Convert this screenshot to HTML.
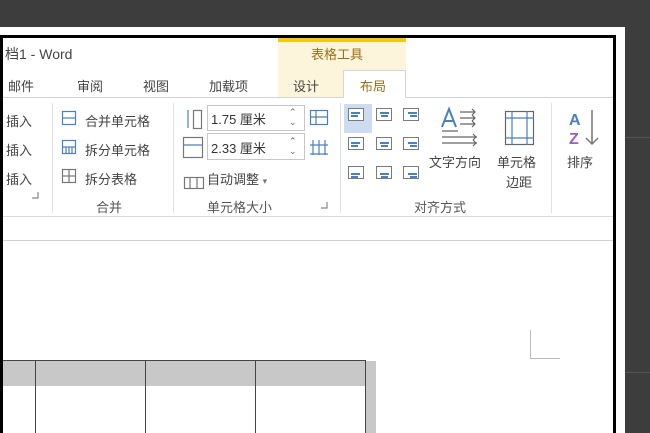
<!DOCTYPE html><html><head><meta charset="utf-8"><style>
*{margin:0;padding:0;box-sizing:border-box}
body{width:650px;height:433px;background:#3d3d3d;position:relative;overflow:hidden;font-family:"Liberation Sans","Noto Sans CJK SC",sans-serif;font-size:13px;color:#444}
.a{position:absolute;white-space:nowrap}
.ib{position:absolute;width:16px;height:13px;border:1px solid #7a7a7a;background:#fff}
.ib i{position:absolute;height:1.5px;background:#4a7fc0;left:2px}
</style></head><body>
<div class="a" style="left:0;top:27px;width:625px;height:406px;background:#fff"></div>
<div class="a" style="left:625px;top:137px;width:25px;height:1px;background:#555"></div>
<div class="a" style="left:625px;top:372px;width:25px;height:1px;background:#555"></div>
<div class="a" style="left:0;top:35px;width:616px;height:398px;border:3px solid #000;border-bottom:none;background:#fff"></div>
<!-- contextual header -->
<div class="a" style="left:278px;top:38px;width:128px;height:59px;background:#fdf4dc"></div>
<div class="a" style="left:278px;top:38px;width:128px;height:4px;background:#f2c811"></div>
<div class="a" style="left:311px;top:44px;color:#9a6f16;font-size:13px">表格工具</div>
<div class="a" style="left:5px;top:44px;font-size:14px;color:#444">档1 - Word</div>
<div class="a" style="left:343px;top:70px;width:63px;height:28px;background:#fff;border:1px solid #d5d5d5;border-bottom:none"></div>
<div class="a" style="left:8px;top:76px">邮件</div>
<div class="a" style="left:77px;top:76px">审阅</div>
<div class="a" style="left:143px;top:76px">视图</div>
<div class="a" style="left:209px;top:76px">加载项</div>
<div class="a" style="left:293px;top:76px">设计</div>
<div class="a" style="left:360px;top:76px;color:#9a6f16">布局</div>
<div class="a" style="left:3px;top:97px;width:340px;height:1px;background:#d5d5d5"></div>
<div class="a" style="left:406px;top:97px;width:207px;height:1px;background:#d5d5d5"></div>
<!-- ribbon -->
<div class="a" style="left:6px;top:111px">插入</div>
<div class="a" style="left:6px;top:140px">插入</div>
<div class="a" style="left:6px;top:169px">插入</div>
<div class="a" style="left:52px;top:103px;width:1px;height:110px;background:#e2e2e2"></div>
<div class="a" style="left:173px;top:103px;width:1px;height:110px;background:#e2e2e2"></div>
<div class="a" style="left:340px;top:103px;width:1px;height:110px;background:#e2e2e2"></div>
<div class="a" style="left:551px;top:103px;width:1px;height:110px;background:#e2e2e2"></div>
<svg class="a" style="left:0;top:0" width="650" height="240" fill="none" stroke-width="1.2">
<g stroke="#4a7fc0"><rect x="62.5" y="111.5" width="13" height="13"/><line x1="62" y1="118" x2="76" y2="118"/>
<rect x="62.5" y="140.5" width="13" height="13"/><line x1="62" y1="147" x2="76" y2="147"/><line x1="66" y1="147" x2="66" y2="154"/><line x1="69" y1="147" x2="69" y2="154"/><line x1="72" y1="147" x2="72" y2="154"/></g>
<g stroke="#777"><rect x="62.5" y="169.5" width="13" height="13"/><line x1="62" y1="176" x2="76" y2="176"/><line x1="69" y1="169" x2="69" y2="183"/></g>
<g stroke="#4a7fc0"><rect x="310.5" y="110.5" width="17" height="14"/><line x1="316" y1="110" x2="316" y2="125"/><line x1="310" y1="117" x2="328" y2="117"/>
<rect x="310.5" y="140.5" width="17" height="13" stroke="none"/><line x1="310" y1="145" x2="328" y2="145"/><line x1="313" y1="140" x2="313" y2="155"/><line x1="319" y1="140" x2="319" y2="155"/><line x1="325" y1="140" x2="325" y2="155"/><line x1="310" y1="154" x2="328" y2="154"/></g>
<g stroke="#4a7fc0"><line x1="188" y1="110" x2="188" y2="128"/><line x1="183" y1="145" x2="203" y2="145"/></g>
<g stroke="#777"><rect x="193.5" y="110.5" width="8" height="18"/><rect x="183.5" y="137.5" width="19" height="20"/><rect x="184.5" y="177.5" width="19" height="11"/><line x1="190" y1="178" x2="190" y2="189"/><line x1="197" y1="178" x2="197" y2="189"/></g>
<path d="M32 198 l6 0 l0 -6" stroke="#888"/><path d="M321 208 l6 0 l0 -6" stroke="#888"/>
<g stroke="#4a7fc0" stroke-width="2"><path d="M442 127 l7 -18 l7 18 M445 121 h8"/></g>
<g stroke="#666"><path d="M442 131 h16 M460 112 h15 M460 118 h15 M460 124 h15 M442 137 h35 M442 143 h35 M472 109 l3 3 l-3 3 M472 115 l3 3 l-3 3 M472 121 l3 3 l-3 3 M473 134 l3 3 l-3 3 M473 140 l3 3 l-3 3"/>
<rect x="505.5" y="111.5" width="28" height="33"/></g>
<g stroke="#4a7fc0"><line x1="512" y1="111" x2="512" y2="145"/><line x1="527" y1="111" x2="527" y2="145"/><line x1="505" y1="118" x2="534" y2="118"/><line x1="505" y1="138" x2="534" y2="138"/></g>
<text x="569" y="125" font-family="Liberation Sans" font-size="16" font-weight="bold" fill="#4a7fc0">A</text>
<text x="569" y="144" font-family="Liberation Sans" font-size="16" font-weight="bold" fill="#9a5fc0">Z</text>
<path d="M592 110 v34 M586 138 l6 6 l6 -6" stroke="#777" stroke-width="1.5"/>
</svg>
<div class="a" style="left:85px;top:111px">合并单元格</div>
<div class="a" style="left:85px;top:140px">拆分单元格</div>
<div class="a" style="left:85px;top:169px">拆分表格</div>
<div class="a" style="left:96px;top:197px;color:#555">合并</div>
<div class="a" style="left:207px;top:105px;width:98px;height:26px;border:1px solid #c6c6c6"></div>
<div class="a" style="left:207px;top:133px;width:98px;height:27px;border:1px solid #c6c6c6"></div>
<div class="a" style="left:211px;top:109px;color:#333">1.75 厘米</div>
<div class="a" style="left:211px;top:138px;color:#333">2.33 厘米</div>
<div class="a" style="left:289px;top:107px;font-size:9px;line-height:10px;color:#666">⌃<br>⌄</div>
<div class="a" style="left:289px;top:136px;font-size:9px;line-height:10px;color:#666">⌃<br>⌄</div>
<div class="a" style="left:207px;top:169px">自动调整 <span style="font-size:9px;color:#777">▾</span></div>
<div class="a" style="left:207px;top:197px;color:#555">单元格大小</div>
<div class="a" style="left:344px;top:104px;width:28px;height:29px;background:#cddcf0"></div>
<div class="ib" style="left:348px;top:108px"><i style="top:3px;width:9px"></i><i style="top:6px;width:7px"></i></div>
<div class="ib" style="left:376px;top:108px"><i style="top:3px;width:9px;left:3px"></i><i style="top:6px;width:7px;left:4px"></i></div>
<div class="ib" style="left:403px;top:108px"><i style="top:3px;width:9px;left:4px"></i><i style="top:6px;width:7px;left:6px"></i></div>
<div class="ib" style="left:348px;top:137px"><i style="top:4px;width:9px"></i><i style="top:7px;width:7px"></i></div>
<div class="ib" style="left:376px;top:137px"><i style="top:4px;width:9px;left:3px"></i><i style="top:7px;width:7px;left:4px"></i></div>
<div class="ib" style="left:403px;top:137px"><i style="top:4px;width:9px;left:4px"></i><i style="top:7px;width:7px;left:6px"></i></div>
<div class="ib" style="left:348px;top:166px"><i style="top:6px;width:9px"></i><i style="top:9px;width:7px"></i></div>
<div class="ib" style="left:376px;top:166px"><i style="top:6px;width:9px;left:3px"></i><i style="top:9px;width:7px;left:4px"></i></div>
<div class="ib" style="left:403px;top:166px"><i style="top:6px;width:9px;left:4px"></i><i style="top:9px;width:7px;left:6px"></i></div>
<div class="a" style="left:429px;top:152px">文字方向</div>
<div class="a" style="left:497px;top:152px">单元格</div>
<div class="a" style="left:506px;top:172px">边距</div>
<div class="a" style="left:567px;top:152px">排序</div>
<div class="a" style="left:414px;top:197px;color:#555">对齐方式</div>
<div class="a" style="left:3px;top:216px;width:610px;height:1px;background:#dcdcdc"></div>
<div class="a" style="left:3px;top:240px;width:610px;height:1px;background:#d0d0d0"></div>
<!-- document -->
<div class="a" style="left:530px;top:330px;width:30px;height:29px;border-left:1px solid #bbb;border-bottom:1px solid #bbb"></div>
<div class="a" style="left:3px;top:361px;width:373px;height:72px;background:#c8c8c8"></div>
<div class="a" style="left:3px;top:386px;width:362px;height:47px;background:#fff"></div>
<div class="a" style="left:3px;top:360px;width:362px;height:1px;background:#444"></div>
<div class="a" style="left:35px;top:360px;width:1px;height:73px;background:#444"></div>
<div class="a" style="left:145px;top:360px;width:1px;height:73px;background:#444"></div>
<div class="a" style="left:255px;top:360px;width:1px;height:73px;background:#444"></div>
<div class="a" style="left:365px;top:360px;width:1px;height:73px;background:#444"></div>
</body></html>
